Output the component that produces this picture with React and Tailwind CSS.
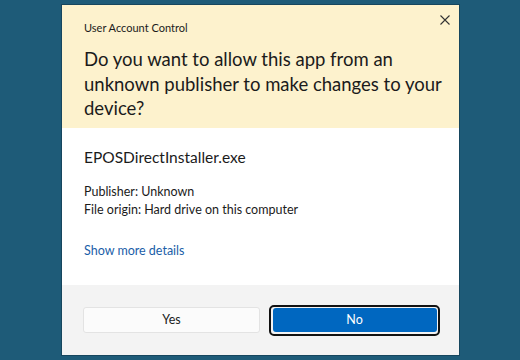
export default function App() {
  return (
    <div className="w-[520px] h-[360px] bg-[#1e5b78] pt-[4px] pl-[61px] overflow-hidden" style={{ fontFamily: 'Lato, "Noto Sans", sans-serif' }}>
      <div className="w-[399px] h-[352px] flex flex-col bg-white border border-[#16465e]">
        <div className="h-[123px] bg-[#fdf2cd] relative pl-[22px] pt-[13px]">
          <div className="text-[11px] leading-[20px] text-[#1b1b1b]">User Account Control</div>
          <svg className="absolute right-[9px] top-[10px]" width="10" height="10" viewBox="0 0 10 10">
            <path d="M0.5 0.5 L9.5 9.5 M9.5 0.5 L0.5 9.5" stroke="#333" strokeWidth="1.1" fill="none" />
          </svg>
          <div className="mt-[9px] text-[18.5px] leading-[24.5px] text-[#1b1b1b] pr-[4px]">
            Do you want to allow this app from an<br />unknown publisher to make changes to your<br />device?
          </div>
        </div>
        <div className="flex-1 pl-[22px] pt-[18px]">
          <div className="text-[15.5px] leading-[22px] text-[#1b1b1b]">EPOSDirectInstaller.exe</div>
          <div className="mt-[15px] text-[12.5px] leading-[18px] text-[#1b1b1b]">
            <div>Publisher: Unknown</div>
            <div>File origin: Hard drive on this computer</div>
          </div>
          <div className="mt-[23px] text-[12.5px] leading-[17px] text-[#1a5ea8]">Show more details</div>
        </div>
        <div className="h-[70px] bg-[#f3f3f3] flex items-center pl-[21px] pr-[19px] gap-[9px]">
          <div className="w-[177px] h-[26px] bg-[#fbfbfb] border border-[#e3e3e3] rounded-[3px] flex items-center justify-center text-[12.5px] text-[#1b1b1b]">Yes</div>
          <div className="flex-1 h-[31px] rounded-[5px] border-2 border-[#111] p-[1.5px]">
            <div className="w-full h-full bg-[#0067c0] rounded-[3px] flex items-center justify-center text-[12.5px] text-white">No</div>
          </div>
        </div>
      </div>
    </div>
  );
}
